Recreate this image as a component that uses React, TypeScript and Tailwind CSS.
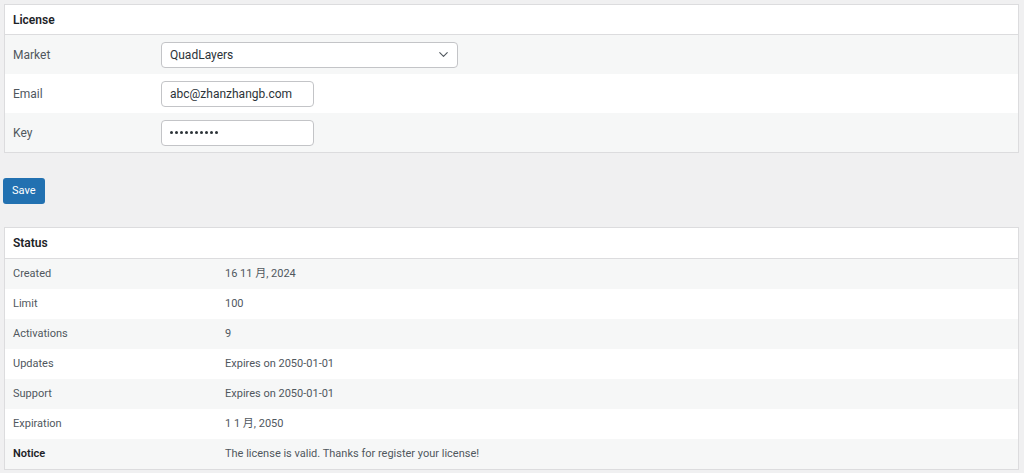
import { ChevronDown } from "lucide-react";

const font = { fontFamily: 'Roboto, "Noto Sans", "Noto Sans CJK SC", sans-serif' };

const statusRows = [
  { label: "Created", value: "16 11 月, 2024" },
  { label: "Limit", value: "100" },
  { label: "Activations", value: "9" },
  { label: "Updates", value: "Expires on 2050-01-01" },
  { label: "Support", value: "Expires on 2050-01-01" },
  { label: "Expiration", value: "1 1 月, 2050" },
  { label: "Notice", value: "The license is valid. Thanks for register your license!", bold: true },
];

export default function App() {
  return (
    <div className="min-h-screen bg-[#f0f0f1] pt-1 pl-1 pr-[5px]" style={font}>
      {/* License */}
      <div className="border border-[#dcdcde] bg-white">
        <div className="h-[30px] flex items-center px-2 border-b border-[#dcdcde] text-[12px] font-semibold text-[#1d2327]">
          License
        </div>
        <div className="h-[39px] flex items-center bg-[#f6f7f7]">
          <div className="w-[156px] pl-2 text-[12px] text-[#50575e]">Market</div>
          <div className="w-[297px] h-[26px] flex items-center justify-between pl-2 pr-[6px] bg-white border border-[#c3c4c7] rounded text-[12px] text-[#2c3338]">
            <span>QuadLayers</span>
            <ChevronDown className="w-[15px] h-[15px] text-[#50575e]" strokeWidth={1.75} />
          </div>
        </div>
        <div className="h-[39px] flex items-center bg-white">
          <div className="w-[156px] pl-2 text-[12px] text-[#50575e]">Email</div>
          <div className="w-[153px] h-[26px] flex items-center pl-2 bg-white border border-[#c3c4c7] rounded text-[12px] text-[#2c3338]">
            abc@zhanzhangb.com
          </div>
        </div>
        <div className="h-[39px] flex items-center bg-[#f6f7f7]">
          <div className="w-[156px] pl-2 text-[12px] text-[#50575e]">Key</div>
          <div className="w-[153px] h-[26px] flex items-center pl-2 bg-white border border-[#c3c4c7] rounded">
            <div className="flex gap-[2px]">
              {Array.from({ length: 10 }).map((_, i) => (
                <span key={i} className="w-[3px] h-[3px] rounded-full bg-[#2c3338]" />
              ))}
            </div>
          </div>
        </div>
      </div>

      {/* Save */}
      <div className="pt-[24px] pb-[23px]">
        <button className="-ml-px h-[26px] px-[9px] bg-[#2271b1] text-white text-[11px] rounded-[3px]">
          Save
        </button>
      </div>

      {/* Status */}
      <div className="border border-[#dcdcde] bg-white">
        <div className="h-[31px] flex items-center px-2 border-b border-[#dcdcde] text-[12px] font-semibold text-[#1d2327]">
          Status
        </div>
        {statusRows.map((row, i) => (
          <div
            key={row.label}
            className={`h-[30px] flex items-center text-[11px] ${i % 2 === 0 ? "bg-[#f6f7f7]" : "bg-white"}`}
          >
            <div className={`w-[220px] pl-2 ${row.bold ? "font-semibold text-[#1d2327]" : "text-[#50575e]"}`}>
              {row.label}
            </div>
            <div className="text-[#50575e]">{row.value}</div>
          </div>
        ))}
      </div>
    </div>
  );
}
